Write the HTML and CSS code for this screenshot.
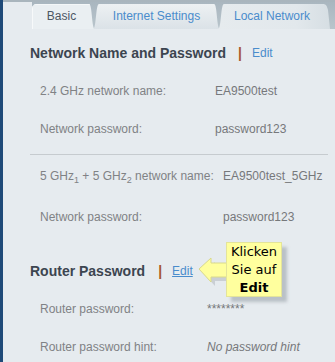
FILE: index.html
```html
<!DOCTYPE html>
<html>
<head>
<meta charset="utf-8">
<link rel="stylesheet" href="styles.css">
</head>
<body>
<div class="page">
  <div class="tabbar">
    <div class="tabs">
      <div class="tab tab-basic">Basic</div>
      <div class="tab tab-internet">Internet Settings</div>
      <div class="tab tab-local">Local Network</div>
    </div>
  </div>
  <div class="content">
    <div class="heading heading-first">
      <span class="heading-title">Network Name and Password</span>
      <span class="pipe">|</span>
      <span class="edit">Edit</span>
    </div>
    <div class="row row-a row-1">
      <span class="label">2.4 GHz network name:</span>
      <span class="value">EA9500test</span>
    </div>
    <div class="row row-a row-2">
      <span class="label">Network password:</span>
      <span class="value">password123</span>
    </div>
    <div class="divider"></div>
    <div class="row row-b row-3">
      <span class="label">5 GHz<sub>1</sub> + 5 GHz<sub>2</sub> network name:</span>
      <span class="value">EA9500test_5GHz</span>
    </div>
    <div class="row row-b row-4">
      <span class="label">Network password:</span>
      <span class="value">password123</span>
    </div>
    <div class="heading heading-second">
      <span class="heading-title">Router Password</span>
      <span class="pipe pipe-second">|</span>
      <span class="edit edit-underline">Edit</span>
    </div>
    <div class="row row-c row-5">
      <span class="label">Router password:</span>
      <span class="value">********</span>
    </div>
    <div class="row row-c row-6">
      <span class="label">Router password hint:</span>
      <span class="value value-italic">No password hint</span>
    </div>
  </div>
  <div class="callout">
    <svg class="callout-arrow" width="40" height="40" viewBox="0 0 40 40">
      <polygon points="7,18 19,7 19,12 36,12 36,26 19,26 19,31" fill="#c3c8cd" opacity="0.8"/>
      <polygon points="3,14 15,3 15,8 32,8 32,22 15,22 15,27" fill="#ffff9e" stroke="#d9d98c" stroke-width="1"/>
    </svg>
    <div class="callout-box">Klicken<br>Sie auf<br><b>Edit</b></div>
  </div>
</div>
</body>
</html>
```
FILE: styles.css
```css
html, body {
  margin: 0;
  padding: 0;
}
body {
  background: #e6ebef;
  font-family: "Liberation Sans", Arial, sans-serif;
}
.page {
  position: relative;
  width: 332px;
  height: 362px;
  border-left: 3px solid #1f4a78;
  background: #e6ebef;
  overflow: hidden;
}
.tabbar {
  border-top: 2px solid #a9b5bd;
  padding-left: 29px;
  height: 27px;
  display: flex;
}
.tabs {
  flex: 1;
  display: flex;
  align-items: flex-end;
  background: linear-gradient(#a9b6bf, #b9c5cc);
}
.tab {
  height: 25px;
  line-height: 25px;
  font-size: 12px;
  text-align: center;
  box-sizing: border-box;
  flex: none;
}
.tab-basic {
  width: 63px;
  padding-right: 4px;
  color: #4c5663;
  background: #eaeff2;
  clip-path: path("M0 25 L0 5 Q0 0 5 0 L57 0 C60.5 0 59.5 25 63 25 Z");
  box-shadow: inset 1px 0 0 #f7f9fa, inset 0 1px 0 #f4f7f8;
}
.tab-internet {
  width: 127px;
  margin-left: -2px;
  color: #4a8ccc;
  background: linear-gradient(#edf1f3, #dbe2e7);
  clip-path: path("M0 25 C3.5 25 2.5 0 6 0 L121 0 C124.5 0 123.5 25 127 25 Z");
}
.tab-local {
  width: 112px;
  margin-left: -2px;
  padding-right: 4px;
  color: #4a8ccc;
  background: linear-gradient(90deg, #e6ebee 0%, #e2e8ec 70%, #d6dee3 100%);
  clip-path: path("M0 25 C3.5 25 2.5 0 6 0 L105 0 C108 0 109 2 110 6 L112 25 Z");
}
.content {
  padding-left: 27px;
}
.heading {
  height: 20px;
  line-height: 20px;
  display: flex;
  align-items: center;
  font-size: 14px;
}
.heading-first {
  margin-top: 14px;
}
.heading-second {
  margin-top: 36px;
}
.heading-title {
  font-weight: bold;
  color: #3c4550;
}
.pipe {
  color: #a8582e;
  font-weight: bold;
  margin: 0 10px 0 12px;
}
.pipe-second {
  margin-left: 13px;
}
.edit {
  font-size: 12px;
  color: #4a8ccc;
}
.edit-underline {
  text-decoration: underline;
}
.row {
  display: grid;
  height: 16px;
  line-height: 16px;
  font-size: 12px;
  padding-left: 10px;
}
.row-a {
  grid-template-columns: 175px auto;
}
.row-b {
  grid-template-columns: 183px auto;
}
.row-c {
  grid-template-columns: 167px auto;
}
.label {
  color: #808285;
  white-space: nowrap;
}
.label sub {
  font-size: 9px;
  line-height: 0;
  vertical-align: -3px;
}
.value {
  color: #76787b;
  white-space: nowrap;
}
.value-italic {
  font-style: italic;
}
.row-1 { margin-top: 20px; }
.row-2 { margin-top: 22px; }
.divider {
  margin-top: 17px;
  width: 298px;
  height: 1px;
  background: #c6cbcf;
}
.row-3 { margin-top: 13px; }
.row-4 { margin-top: 25px; }
.row-5 { margin-top: 20px; }
.row-6 { margin-top: 22px; }
.callout {
  position: absolute;
  left: 193px;
  top: 242px;
  display: flex;
  align-items: flex-start;
}
.callout-arrow {
  margin-top: 13px;
  margin-right: -10px;
  flex: none;
}
.callout-box {
  position: relative;
  width: 56px;
  padding: 0;
  background: #ffff9e;
  border: 1px solid #e4e49a;
  box-sizing: border-box;
  box-shadow: 5px 5px 3px rgba(150, 158, 166, 0.55);
  font-family: "DejaVu Sans", Verdana, sans-serif;
  font-size: 13px;
  line-height: 18px;
  text-align: center;
  color: #000;
  height: 55px;
}
.callout-box b {
  font-weight: bold;
}
```
